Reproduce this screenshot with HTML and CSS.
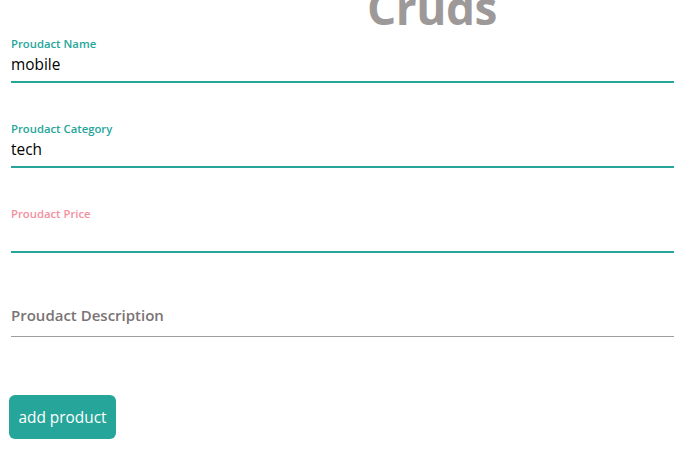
FILE: index.html
```html
<!DOCTYPE html>
<html>
<head>
<meta charset="utf-8">
<link rel="stylesheet" href="styles.css">
</head>
<body>
<div class="page">
  <h1 class="title">Cruds</h1>
  <form class="form">
    <div class="field">
      <label class="label">Proudact Name</label>
      <div class="input focused">mobile</div>
    </div>
    <div class="field">
      <label class="label">Proudact Category</label>
      <div class="input focused">tech</div>
    </div>
    <div class="field">
      <label class="label invalid">Proudact Price</label>
      <div class="input focused"></div>
    </div>
    <div class="field field-plain">
      <label class="placeholder">Proudact Description</label>
      <div class="input plain"></div>
    </div>
    <div class="actions">
      <button type="button" class="btn">add product</button>
    </div>
  </form>
</div>
</body>
</html>
```
FILE: styles.css
```css
* { box-sizing: border-box; }
html, body { margin: 0; padding: 0; background: #fff; }
body {
  font-family: "Open Sans", "Noto Sans", sans-serif;
  overflow: hidden;
  width: 674px;
  height: 456px;
}
.page {
  padding-left: 11px;
}
.title {
  margin: -22px 0 0 0;
  height: 58px;
  padding-left: 356px;
  font-size: 46px;
  font-weight: 700;
  line-height: 58px;
  color: #9e9999;
  letter-spacing: -0.5px;
}
.form {
  display: flex;
  flex-direction: column;
  gap: 38px;
}
.field {
  position: relative;
  display: flex;
  flex-direction: column;
}
.label {
  font-size: 11.3px;
  line-height: 15px;
  height: 15px;
  color: #26a69a;
  font-weight: 600;
}
.label.invalid { color: #f48fa0; }
.input {
  height: 32px;
  padding-bottom: 2px;
  line-height: 28px;
  font-size: 15.4px;
  color: #000;
  border-bottom: 2px solid #26a69a;
}
.field-plain { padding-top: 15px; }
.input.plain {
  height: 31px;
  border-bottom: 1px solid #9e9e9e;
}
.placeholder {
  position: absolute;
  left: 0;
  top: 13px;
  font-size: 15px;
  line-height: 22px;
  font-weight: 600;
  color: #7a7474;
}
.actions {
  margin-top: 20px;
  margin-left: -2px;
}
.btn {
  width: 107px;
  height: 44px;
  border: none;
  border-radius: 6px;
  background: #26a69a;
  color: #fff;
  font-family: "Open Sans", "Noto Sans", sans-serif;
  font-size: 15.4px;
  padding: 0;
}
```
